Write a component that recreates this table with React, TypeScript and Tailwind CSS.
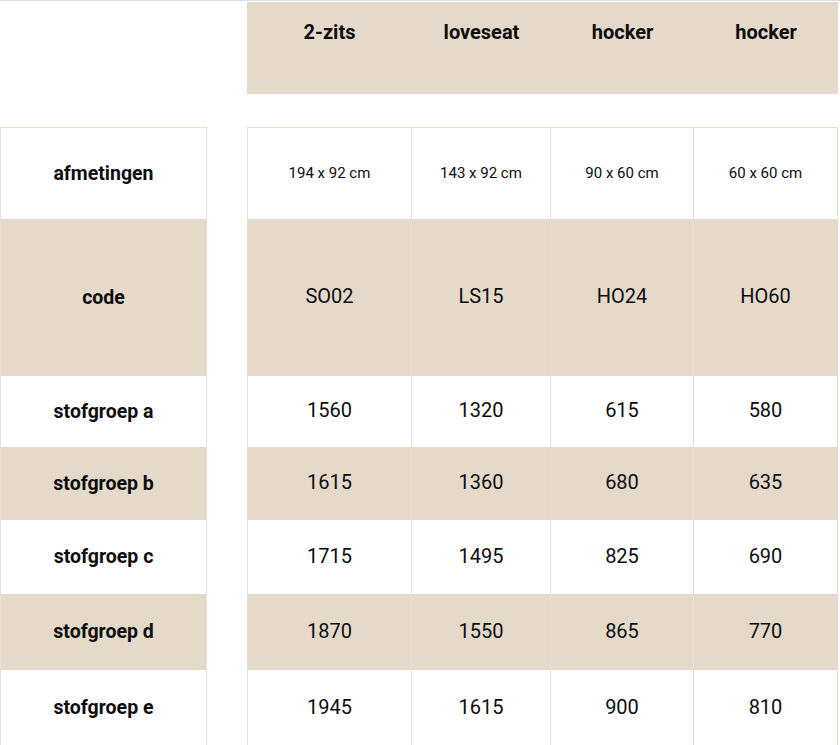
const cols = ["2-zits", "loveseat", "hocker", "hocker"];
const colW = ["w-[165px]", "w-[139px]", "w-[143px]", "w-[144px]"];

const rows = [
  { label: "afmetingen", h: "h-[91px]", beige: false, small: true, values: ["194 x 92 cm", "143 x 92 cm", "90 x 60 cm", "60 x 60 cm"] },
  { label: "code", h: "h-[157px]", beige: true, small: false, values: ["SO02", "LS15", "HO24", "HO60"] },
  { label: "stofgroep a", h: "h-[71px]", beige: false, small: false, values: ["1560", "1320", "615", "580"] },
  { label: "stofgroep b", h: "h-[73px]", beige: true, small: false, values: ["1615", "1360", "680", "635"] },
  { label: "stofgroep c", h: "h-[74px]", beige: false, small: false, values: ["1715", "1495", "825", "690"] },
  { label: "stofgroep d", h: "h-[76px]", beige: true, small: false, values: ["1870", "1550", "865", "770"] },
  { label: "stofgroep e", h: "h-[76px]", beige: false, small: false, values: ["1945", "1615", "900", "810"] },
];

export default function App() {
  return (
    <div
      className="w-[840px] h-[745px] overflow-hidden bg-white border-t border-[#dcdcdc] text-[#0d0d0d]"
      style={{ fontFamily: "Roboto, 'Liberation Sans', sans-serif" }}
    >
      {/* kop */}
      <div className="flex mt-px">
        <div className="w-[247px]" />
        <div className="flex h-[92px] bg-[#e5d9ca]">
          {cols.map((c, i) => (
            <div key={i} className={`${colW[i]} pt-[18px] text-center text-[20px] font-bold leading-6`}>
              {c}
            </div>
          ))}
        </div>
      </div>

      <div className="h-[33px]" />

      {/* tabel */}
      <div className="flex">
        <div className="w-[207px] border-x border-t border-[#e6dfd6]">
          {rows.map((r) => (
            <div
              key={r.label}
              className={`${r.h} flex items-center justify-center text-[19.5px] font-bold ${r.beige ? "bg-[#e5d9ca]" : "bg-white"}`}
            >
              {r.label}
            </div>
          ))}
        </div>
        <div className="w-[40px]" />
        <div className="border-l border-t border-[#e6dfd6]">
          {rows.map((r) => (
            <div key={r.label} className={`flex ${r.h} ${r.beige ? "bg-[#e5d9ca]" : "bg-white"}`}>
              {r.values.map((v, i) => (
                <div
                  key={i}
                  className={`${i === 0 ? "w-[164px]" : colW[i]} flex items-center justify-center border-r border-[#e6dfd6] ${r.small ? "text-[15px]" : "text-[20px] pb-[3px]"}`}
                >
                  {v}
                </div>
              ))}
            </div>
          ))}
        </div>
      </div>
    </div>
  );
}
